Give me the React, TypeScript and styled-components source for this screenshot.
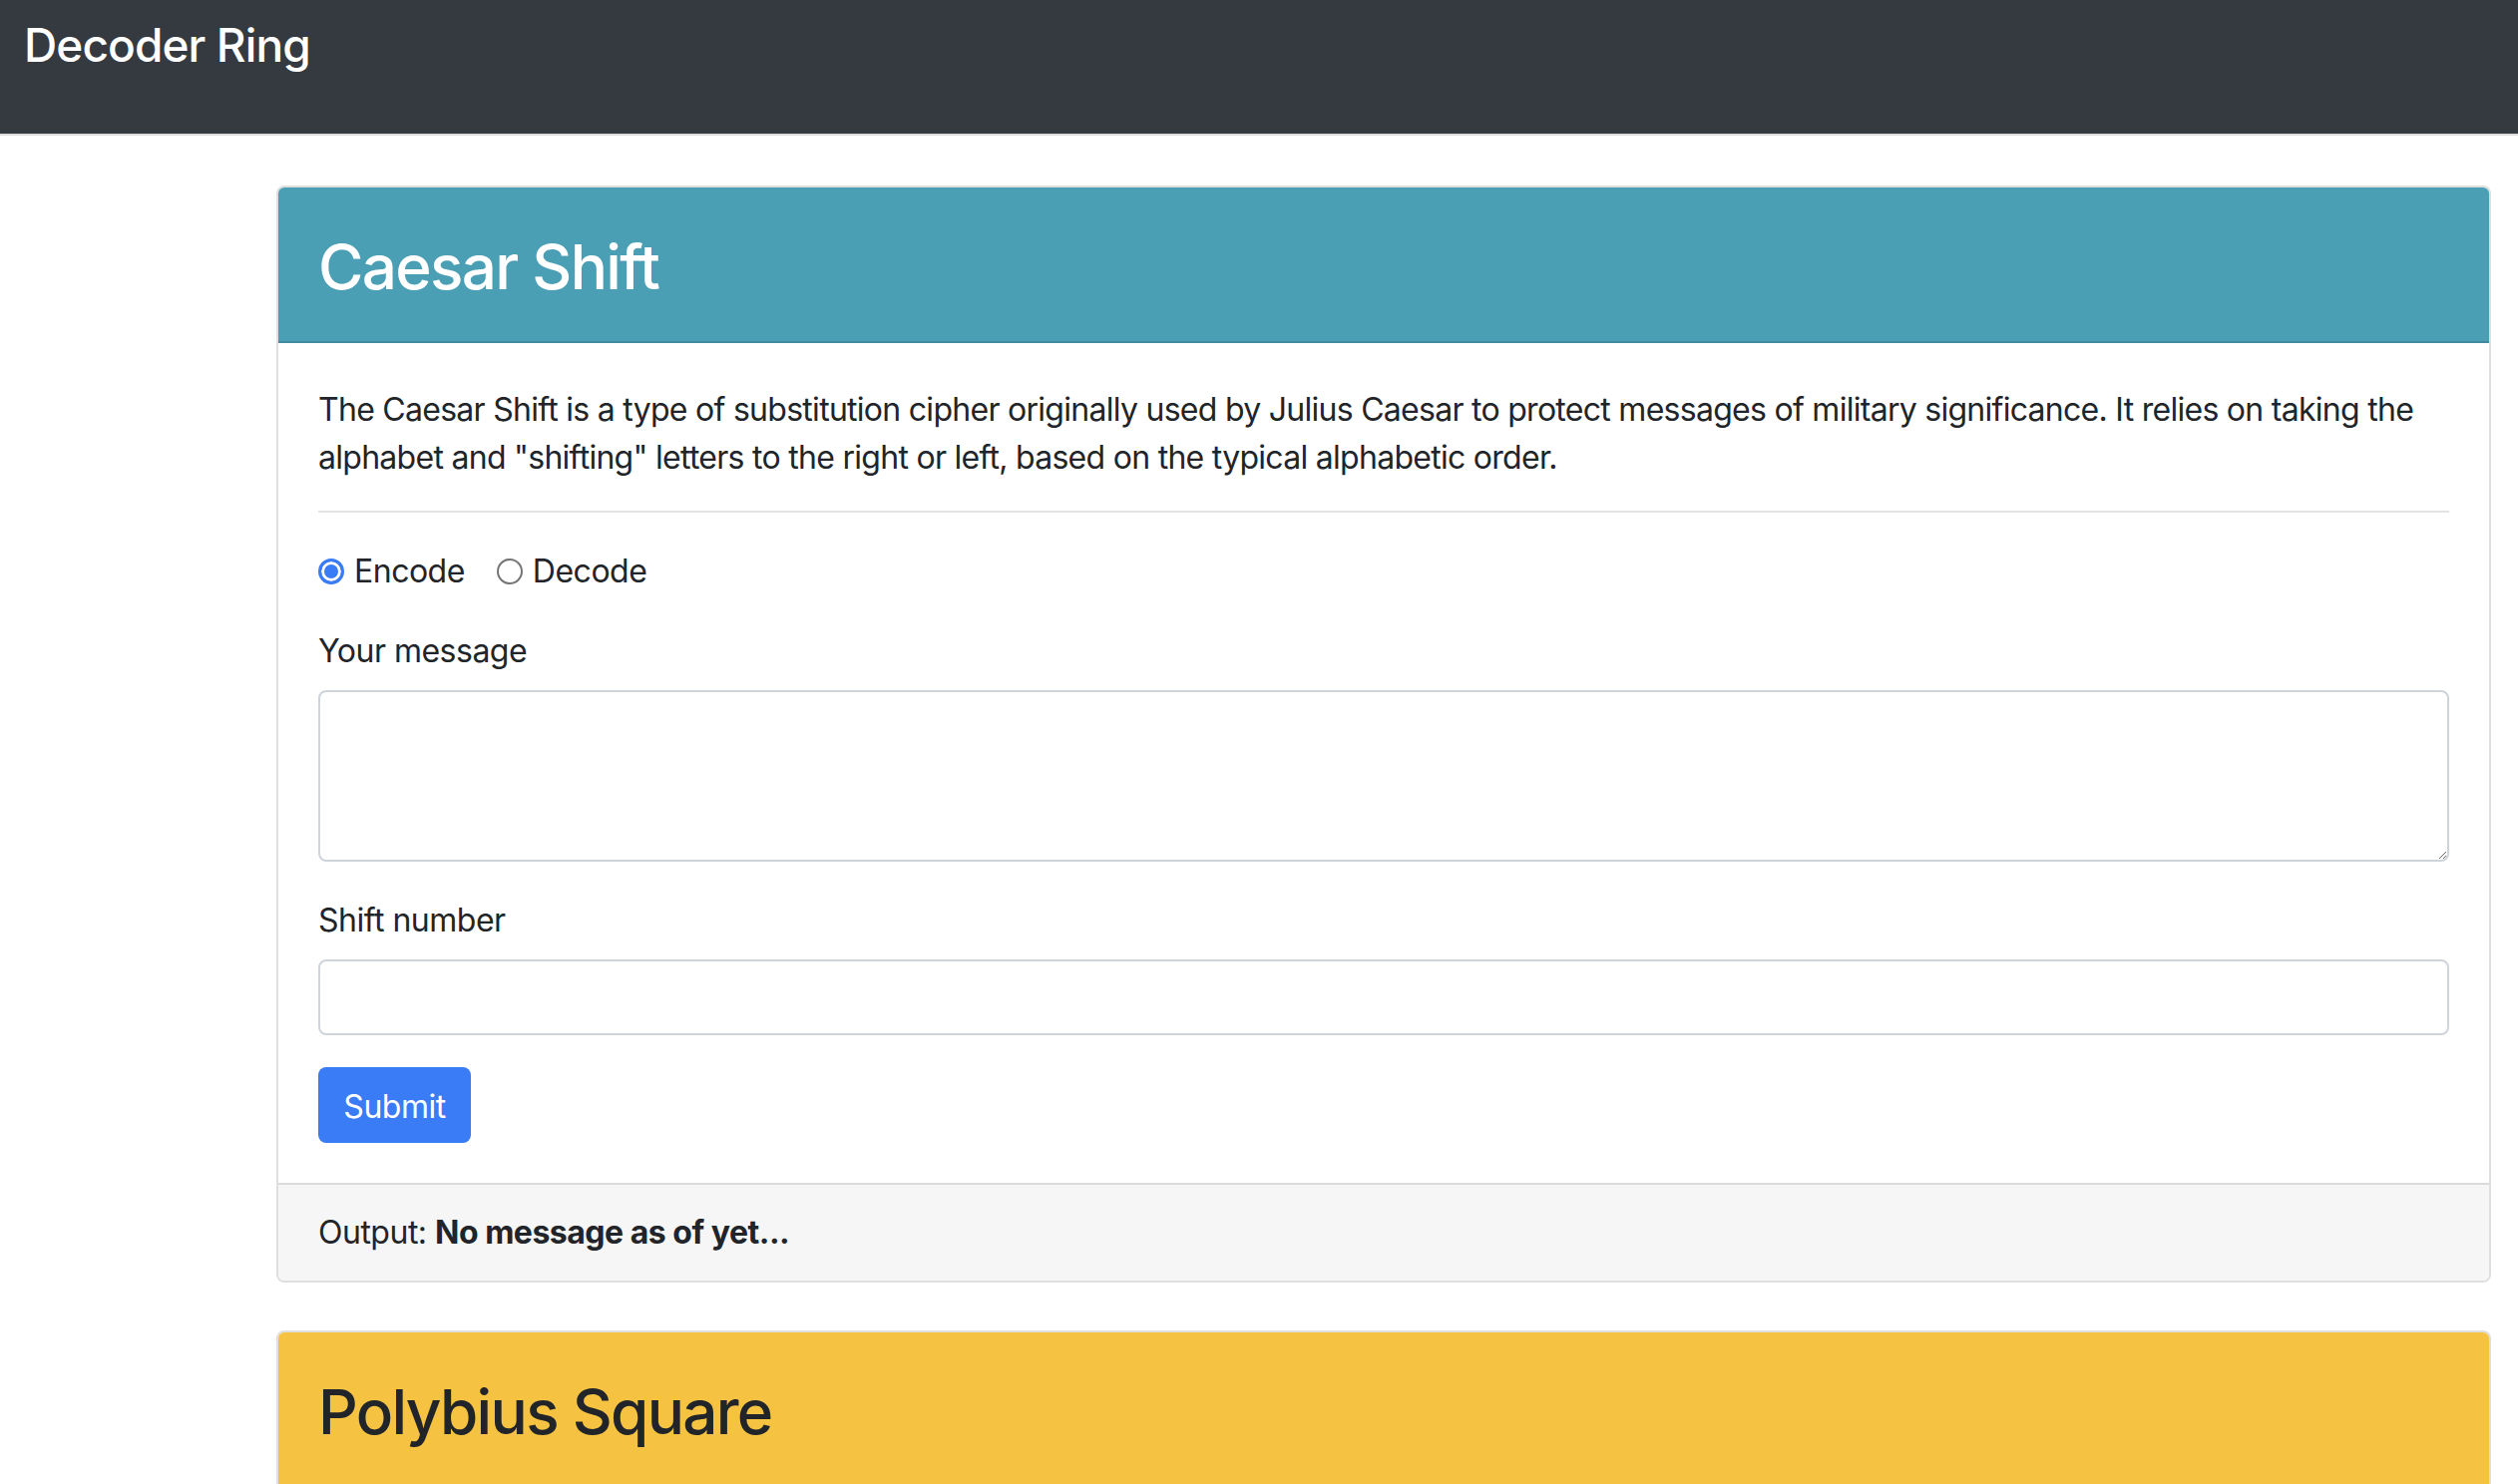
import React from "react";
import styled, { createGlobalStyle } from "styled-components";

const Global = createGlobalStyle`
  html, body { margin: 0; padding: 0; background: #ffffff; }
  body {
    font-family: Inter, "Liberation Sans", Arial, sans-serif;
    color: #212529;
    font-size: 32px;
    line-height: 48px;
    letter-spacing: -0.5px;
  }
  * { box-sizing: border-box; }
`;

const NavBar = styled.nav`
  height: 136px;
  background: #343a40;
  border-bottom: 2px solid #dcdcdc;
  padding: 17px 24px 0;
`;

const Brand = styled.div`
  color: #ffffff;
  font-size: 46px;
  line-height: 56px;
  font-weight: 500;
  letter-spacing: -0.9px;
`;

const Main = styled.main`
  padding: 50px 0 0 277px;
  display: flex;
  flex-direction: column;
  gap: 48px;
`;

const Card = styled.section`
  width: 2220px;
  border: 2px solid #dfdfdf;
  border-radius: 8px;
  overflow: hidden;
  background: #ffffff;
`;

const CardHeader = styled.header<{ $bg: string; $fg: string }>`
  background: ${(p) => p.$bg};
  color: ${(p) => p.$fg};
  height: 156px;
  padding: 6px 40px 0;
  display: flex;
  align-items: center;
  border-bottom: 2px solid rgba(0, 0, 0, 0.12);
`;

const Title = styled.h2`
  margin: 0;
  font-size: 62px;
  line-height: 76px;
  font-weight: 500;
  letter-spacing: -1.7px;
`;

const CardBody = styled.div`
  padding: 43px 40px 40px;
`;

const Lead = styled.p`
  margin: 0;
  letter-spacing: -0.72px;
`;

const Divider = styled.hr`
  margin: 29px 0 32px;
  border: 0;
  border-top: 2px solid #e3e3e3;
`;

const RadioRow = styled.div`
  display: flex;
  align-items: center;
  gap: 32px;
  padding-top: 3px;
  margin-bottom: 29px;
`;

const RadioLabel = styled.label`
  display: flex;
  align-items: center;
  gap: 10px;
`;

const Radio = styled.input.attrs({ type: "radio" })`
  appearance: none;
  -webkit-appearance: none;
  margin: 0;
  width: 26px;
  height: 26px;
  border-radius: 50%;
  border: 2px solid #767676;
  background: #ffffff;
  &:checked {
    border: 3px solid #3a7bf6;
    background: #3a7bf6;
    box-shadow: inset 0 0 0 3px #ffffff;
  }
`;

const Field = styled.div`
  display: flex;
  flex-direction: column;
  gap: 15px;
  margin-bottom: 32px;
`;

const Label = styled.label`
  display: block;
  padding-top: 3px;
`;

const TextArea = styled.textarea`
  width: 100%;
  height: 172px;
  border: 2px solid #ced4da;
  border-radius: 8px;
  font: inherit;
  padding: 12px 24px;
  resize: vertical;
  outline: none;
`;

const TextInput = styled.input`
  width: 100%;
  height: 76px;
  border: 2px solid #ced4da;
  border-radius: 8px;
  font: inherit;
  padding: 12px 24px;
  outline: none;
`;

const Button = styled.button`
  width: 153px;
  height: 76px;
  background: #3a7bf6;
  color: #ffffff;
  border: 0;
  border-radius: 8px;
  font-family: inherit;
  font-size: 32px;
  letter-spacing: -0.5px;
  padding: 2px 0 0;
`;

const CardFooter = styled.footer`
  background: #f6f6f6;
  border-top: 2px solid #dadada;
  padding: 24px 40px 24px;
`;

const Strong = styled.strong`
  font-weight: 700;
`;

export default function App() {
  return (
    <>
      <Global />
      <NavBar>
        <Brand>Decoder Ring</Brand>
      </NavBar>
      <Main>
        <Card>
          <CardHeader $bg="#4a9fb5" $fg="#ffffff">
            <Title>Caesar Shift</Title>
          </CardHeader>
          <CardBody>
            <Lead>
              The Caesar Shift is a type of substitution cipher originally used by Julius Caesar to
              protect messages of military significance. It relies on taking the alphabet and
              "shifting" letters to the right or left, based on the typical alphabetic order.
            </Lead>
            <Divider />
            <form onSubmit={(e) => e.preventDefault()}>
              <RadioRow>
                <RadioLabel>
                  <Radio name="mode" defaultChecked />
                  Encode
                </RadioLabel>
                <RadioLabel>
                  <Radio name="mode" />
                  Decode
                </RadioLabel>
              </RadioRow>
              <Field>
                <Label htmlFor="msg">Your message</Label>
                <TextArea id="msg" />
              </Field>
              <Field>
                <Label htmlFor="shift">Shift number</Label>
                <TextInput id="shift" type="text" />
              </Field>
              <Button type="submit">Submit</Button>
            </form>
          </CardBody>
          <CardFooter>
            Output: <Strong>No message as of yet...</Strong>
          </CardFooter>
        </Card>
        <Card>
          <CardHeader $bg="#f5c242" $fg="#212529">
            <Title>Polybius Square</Title>
          </CardHeader>
          <CardBody />
        </Card>
      </Main>
    </>
  );
}
